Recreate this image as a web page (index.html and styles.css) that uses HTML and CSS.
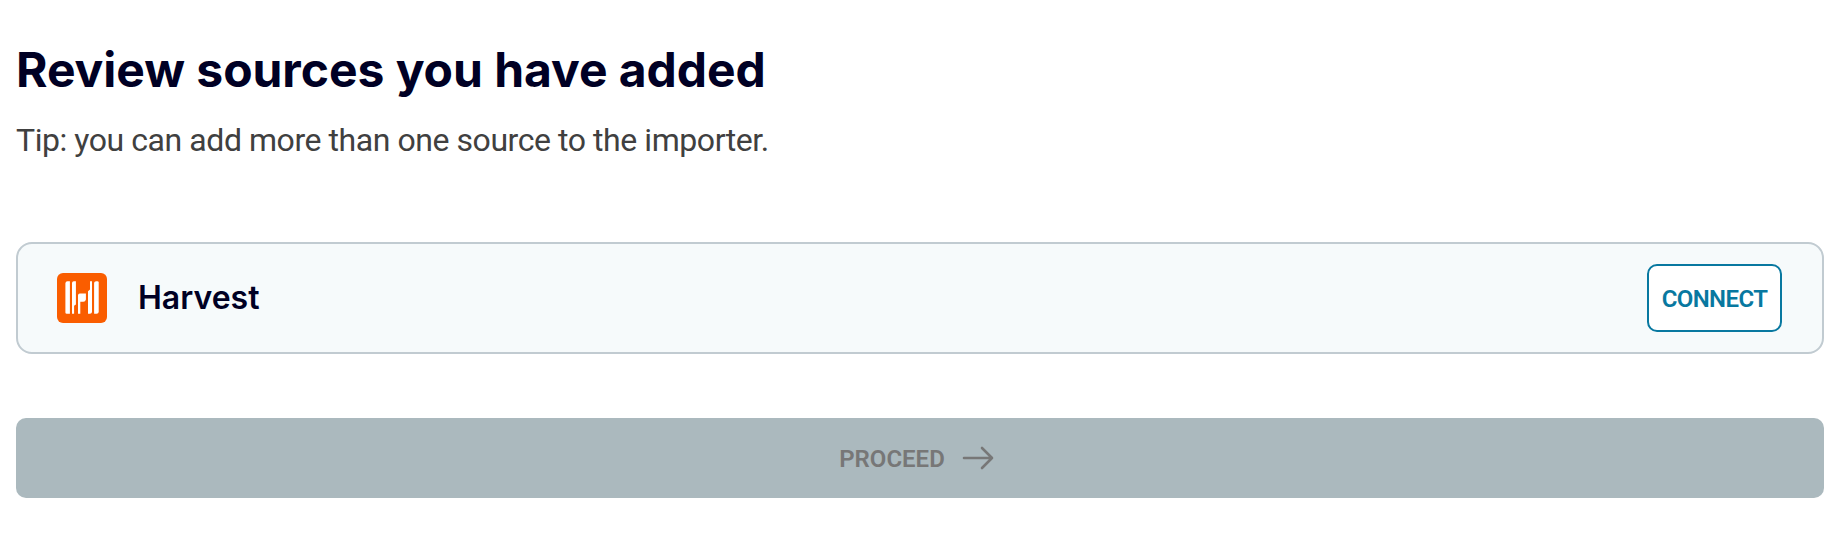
FILE: index.html
```html
<!DOCTYPE html>
<html lang="en">
<head>
	<meta charset="UTF-8">
	<title>Review sources</title>
	<link rel="stylesheet" href="styles.css">
</head>
<body>
	<main class="review">
		<h1 class="title"><span>Review sources you have added</span></h1>
		<p class="tip"><span>Tip: you can add more than one source to the importer.</span></p>
		<div class="source">
			<svg class="source-logo" width="50" height="50" viewBox="0 0 50 50">
				<rect width="50" height="50" rx="6" fill="#fa5d00"/>
				<g fill="#fff">
					<path d="M8.4 10.2q.2-1.9 2-2h2.5v32.6H9.8q-1.4 0-1.4-1.4z"/>
					<path d="M15 10q.1-1.8 1.8-1.8h2.1v23.4l-1.8 1.2v8H15z"/>
					<path d="M21 22.2q.1-1.8 1.8-1.8h6.1v6q-.4 2.2-2.6 2.4h-3v12H21z"/>
					<path d="M33 8.2h2v30.8q-.2 1.8-2 1.8h-2V18.2l2-1.6z"/>
					<path d="M37.1 10q.2-1.8 2-1.8h1.2q1.4 0 1.4 1.4v29.4q-.2 1.8-2 1.8h-2.6z"/>
				</g>
			</svg>
			<h2 class="source-name"><span>Harvest</span></h2>
			<button class="connect"><span>CONNECT</span></button>
		</div>
		<button class="proceed" disabled>
			<span>PROCEED</span>
			<svg class="arrow" width="32" height="24" viewBox="0 0 32 24">
				<path d="M2 12h28M20 2l10 10-10 10"/>
			</svg>
		</button>
	</main>
</body>
</html>
```

FILE: styles.css
```css
body {
	background: white;
	margin: 0;
}

.review {
	padding: 40px 16px 0;
}

.title {
	margin: 0;
	color: #000024;
	font: 700 48px/60px Inter, sans-serif;
	letter-spacing: -0.04px;
}

.tip {
	margin: 20px 0 0;
	color: #404040;
	font: 400 32px/40px Roboto, sans-serif;
	letter-spacing: -0.44px;
}

.source {
	display: flex;
	align-items: center;
	box-sizing: border-box;
	height: 112px;
	margin-top: 82px;
	padding: 0 40px 0 39px;
	background: #f6fafb;
	border: 2px solid #c1cbd1;
	border-radius: 16px;
}

.source-name {
	margin: 0 auto 0 31px;
	color: #000024;
	font: 600 32px/40px Inter, sans-serif;
}

.connect {
	box-sizing: border-box;
	width: 135px;
	height: 68px;
	padding: 2px 0 0;
	background: white;
	color: #0878a0;
	border: 2px solid #0878a0;
	border-radius: 10px;
	font: 600 24px/30px Roboto, sans-serif;
	letter-spacing: -0.6px;
}

.proceed {
	display: flex;
	align-items: center;
	justify-content: center;
	gap: 17px;
	width: 100%;
	height: 80px;
	margin-top: 64px;
	padding: 0 7px 0 0;
	background: #abb9be;
	color: #777;
	border: none;
	border-radius: 10px;
	font: 600 24px/30px Roboto, sans-serif;
}

.proceed span {
	padding-top: 2px;
}

.arrow {
	fill: none;
	stroke: #777;
	stroke-width: 2.6;
	stroke-linecap: round;
	stroke-linejoin: round;
}
```
